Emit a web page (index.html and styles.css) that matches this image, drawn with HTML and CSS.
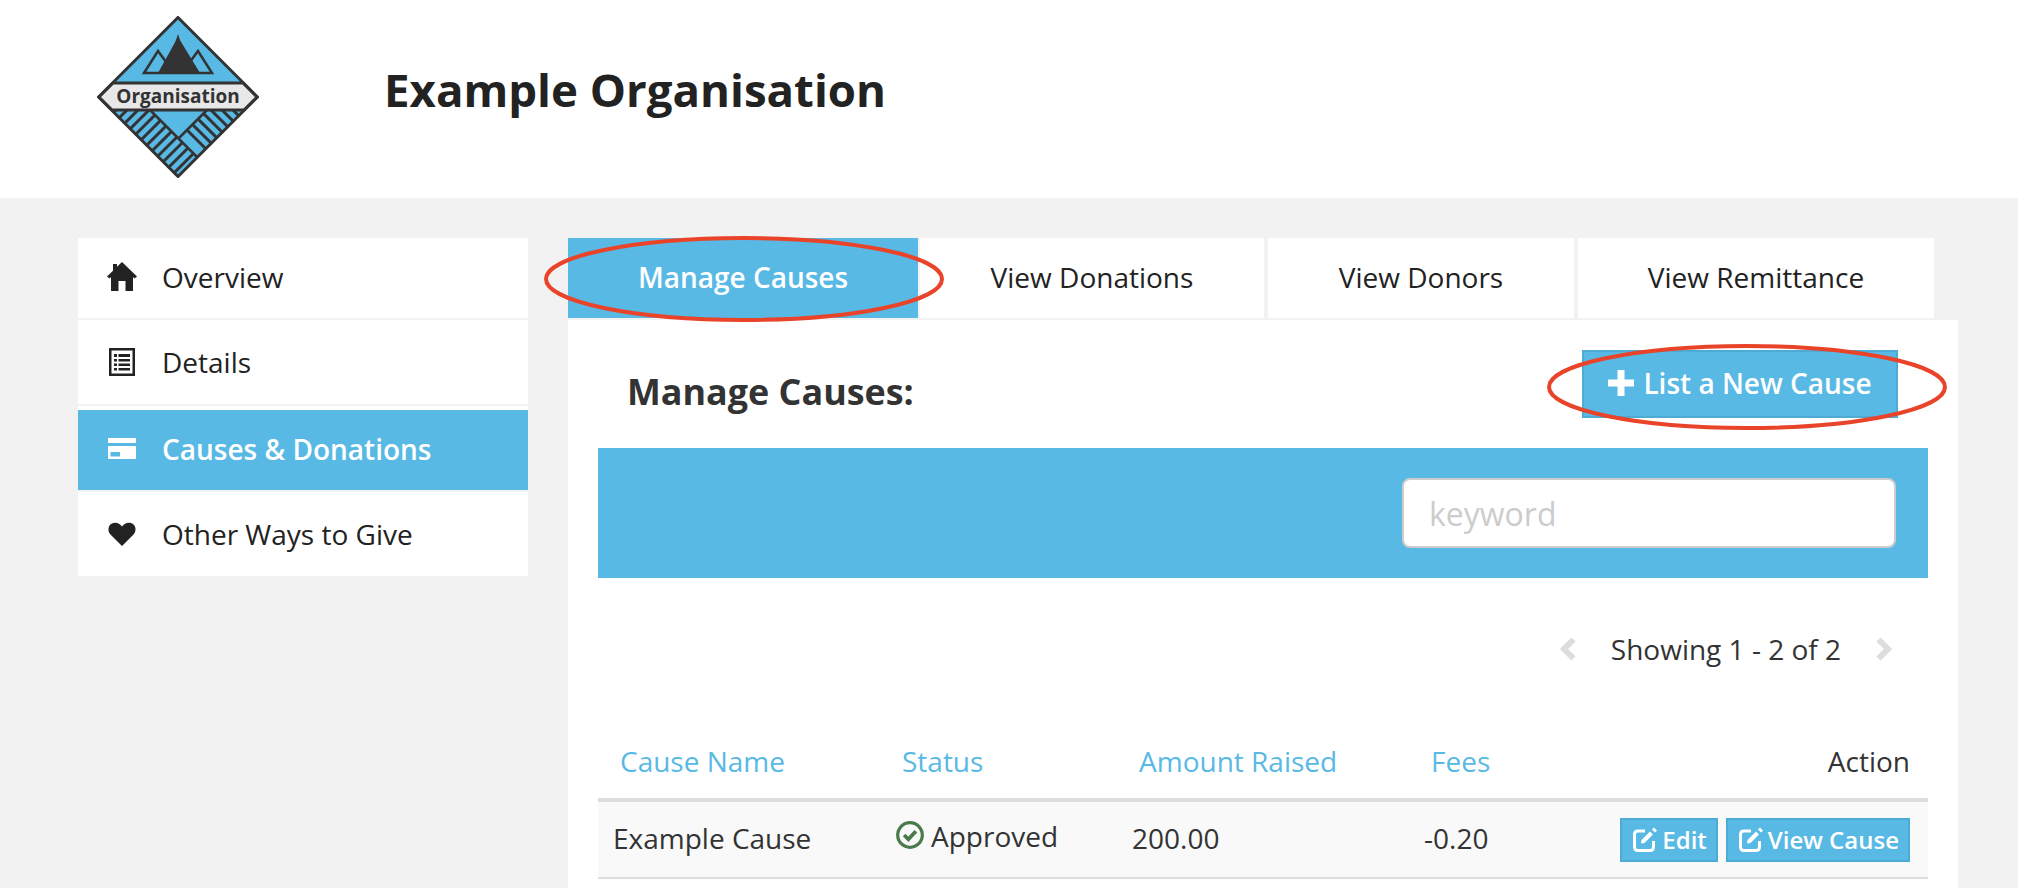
FILE: index.html
```html
<!DOCTYPE html>
<html lang="en">
<head>
<meta charset="utf-8">
<title>Example Organisation</title>
<link rel="stylesheet" href="styles.css">
</head>
<body>
<header class="site-header">
  <svg class="logo" viewBox="0 0 162 162" width="162" height="162">
    <defs>
      <clipPath id="bandL"><polygon points="13,94 53,94 101,142 81,162"/></clipPath>
      <clipPath id="bandR"><polygon points="110,94 149,94 101,142 81,123"/></clipPath>
    </defs>
    <polygon points="81,1.500 160.500,81 81,160.500 1.500,81" fill="#58b9e5" stroke="#333" stroke-width="3"/>
    <polygon points="47,57 61,35 72,50 81,22 90,50 101,35 115,57" fill="#58b9e5" stroke="#333" stroke-width="2.5" stroke-linejoin="miter"/>
    <polygon points="81,21 103,57 61,57" fill="#333"/>
    <g clip-path="url(#bandL)" stroke="#333" stroke-width="3">
      <path d="M0 113L113 0M0 124L124 0M0 135L135 0M0 146L146 0M0 157L157 0M0 168L168 0M0 179L179 0M0 190L190 0M0 201L201 0M0 212L212 0M0 223L223 0M0 234L234 0"/>
    </g>
    <g clip-path="url(#bandR)" stroke="#333" stroke-width="3">
      <path d="M0 -64L162 98M0 -53L162 109M0 -42L162 120M0 -31L162 131M0 -20L162 142M0 -9L162 153M0 2L162 164M0 13L162 175M0 24L162 186"/>
    </g>
    <path d="M53 94L101 142M110 94L81 123" stroke="#333" stroke-width="2.5" fill="none"/>
    <polygon points="16,67 146,67 160,81 147,94 15,94 2,81" fill="#e8e8e8" stroke="#333" stroke-width="3"/>
    <text class="logo-text" x="81" y="87" text-anchor="middle">Organisation</text>
  </svg>
  <h1 class="org-name">Example Organisation</h1>
</header>

<div class="page">
  <nav class="side-nav">
    <a class="side-item">
      <svg class="side-icon" viewBox="0 0 30 30"><path d="M15 0L30 14.5L27.500 16.500L26 15V29H18.500V19H11.500V29H4V15L2.500 16.500L0 14.500L6 8.700V2H10V4.800Z" fill="#222"/></svg>
      <span>Overview</span>
    </a>
    <a class="side-item">
      <svg class="side-icon" viewBox="0 0 30 30"><path fill-rule="evenodd" d="M2 1H28V29H2ZM4.500 3.500V26.500H25.500V3.500ZM7 7H10V10H7ZM11.500 7H23V10H11.500ZM7 12H10V14.500H7ZM11.500 12H23V14.500H11.500ZM7 16.500H10V19H7ZM11.500 16.500H23V19H11.500ZM7 21H10V23.500H7ZM11.500 21H23V23.500H11.500Z" fill="#222"/></svg>
      <span>Details</span>
    </a>
    <a class="side-item side-active">
      <svg class="side-icon" viewBox="0 0 30 30"><path fill-rule="evenodd" d="M1 4H29V9H1ZM1 12H29V25H1ZM3.500 18V22.500H13V18Z" fill="#fff"/></svg>
      <span>Causes &amp; Donations</span>
    </a>
    <a class="side-item">
      <svg class="side-icon" viewBox="0 0 30 30"><path d="M15 27L3.500 15.500C0.500 12.500 1 7 4 5C7.500 2.500 12.500 3.500 15 7.500C17.500 3.500 22.500 2.500 26 5C29 7 29.500 12.500 26.500 15.500Z" fill="#222"/></svg>
      <span>Other Ways to Give</span>
    </a>
  </nav>

  <main class="main">
    <div class="tabs">
      <a class="tab tab-active tab-a">Manage Causes</a>
      <a class="tab tab-b">View Donations</a>
      <a class="tab tab-c">View Donors</a>
      <a class="tab tab-d">View Remittance</a>
    </div>
    <section class="panel">
      <div class="panel-head">
        <h2 class="panel-title">Manage Causes:</h2>
        <a class="btn-new">
          <svg class="plus" viewBox="0 0 26 26"><path d="M9.500 0H16.500V9.500H26V16.500H16.500V26H9.500V16.500H0V9.500H9.500Z" fill="#fff"/></svg>
          List a New Cause
        </a>
      </div>
      <div class="filter">
        <input class="keyword" type="text" placeholder="keyword">
      </div>
      <div class="pager">
        <svg class="chev" viewBox="0 0 16 24"><path d="M13.500 2.500L4 12L13.500 21.500" fill="none" stroke="#ddd" stroke-width="6"/></svg>
        <span class="pager-text">Showing 1 - 2 of 2</span>
        <svg class="chev" viewBox="0 0 16 24"><path d="M2.500 2.500L12 12L2.500 21.500" fill="none" stroke="#ddd" stroke-width="6"/></svg>
      </div>
      <table class="causes">
        <colgroup><col class="c1"><col class="c2"><col class="c3"><col class="c4"><col></colgroup>
        <thead>
          <tr>
            <th>Cause Name</th>
            <th>Status</th>
            <th>Amount Raised</th>
            <th>Fees</th>
            <th class="th-action">Action</th>
          </tr>
        </thead>
        <tbody>
          <tr>
            <td>Example Cause</td>
            <td><span class="status"><svg class="check" viewBox="0 0 28 28"><circle cx="14" cy="14" r="11.500" fill="none" stroke="#4a7a4a" stroke-width="3"/><path d="M8.500 14L12.500 18L19.500 10.500" fill="none" stroke="#4a7a4a" stroke-width="3.500"/></svg>Approved</span></td>
            <td>200.00</td>
            <td>-0.20</td>
            <td class="td-action">
              <div class="actions">
                <a class="btn-small"><svg class="edit" viewBox="0 0 26 26"><path d="M13 4H6C3.800 4 2.500 5.300 2.500 7.500V20C2.500 22.200 3.800 23.500 6 23.500H18C20.200 23.500 21.500 22.200 21.500 20V14" fill="none" stroke="#fff" stroke-width="3"/><path d="M9.500 13L18 4.500L21 7.500L12.500 16L9 16.500Z M20 2.500L22 .5L25 3.500L23 5.500Z" fill="#fff"/></svg>Edit</a>
                <a class="btn-small"><svg class="edit" viewBox="0 0 26 26"><path d="M13 4H6C3.800 4 2.500 5.300 2.500 7.500V20C2.500 22.200 3.800 23.500 6 23.500H18C20.200 23.500 21.500 22.200 21.500 20V14" fill="none" stroke="#fff" stroke-width="3"/><path d="M9.500 13L18 4.500L21 7.500L12.500 16L9 16.500Z M20 2.500L22 .5L25 3.500L23 5.500Z" fill="#fff"/></svg>View Cause</a>
              </div>
            </td>
          </tr>
        </tbody>
      </table>
    </section>
  </main>
</div>

<svg class="mark mark-tab" viewBox="0 0 400 86" width="400" height="86"><ellipse cx="200" cy="43" rx="198" ry="41" fill="none" stroke="#e9432a" stroke-width="4"/></svg>
<svg class="mark mark-btn" viewBox="0 0 400 86" width="400" height="86"><ellipse cx="200" cy="43" rx="198" ry="41" fill="none" stroke="#e9432a" stroke-width="4"/></svg>
</body>
</html>
```

FILE: styles.css
```css
html, body {
  margin: 0;
  padding: 0;
  height: 888px;
  overflow: hidden;
}
body {
  position: relative;
  background: #f2f2f2;
  font-family: "Open Sans", "Noto Sans", sans-serif;
  font-size: 28px;
  color: #222;
}
.site-header {
  display: flex;
  align-items: center;
  height: 198px;
  background: #fff;
  padding-left: 97px;
  box-sizing: border-box;
}
.logo {
  flex: none;
  margin-top: -4px;
}
.logo-text {
  font-family: "Open Sans", sans-serif;
  font-weight: 700;
  font-size: 19px;
  fill: #333;
}
.org-name {
  margin: -20px 0 0 125px;
  font-size: 45.600px;
  font-weight: 700;
  color: #222;
  line-height: 1.2;
}
.page {
  display: flex;
  gap: 40px;
  padding: 40px 0 0 78px;
}
.side-nav {
  width: 450px;
  flex: none;
  display: flex;
  flex-direction: column;
  align-self: flex-start;
  gap: 2px;
}
.side-item {
  display: flex;
  align-items: center;
  height: 80px;
  box-sizing: border-box;
  background: #fff;
  padding: 0 0 2px 29px;
}
.side-item:nth-child(2) { height: 84px; padding-bottom: 0; }
.side-item:nth-child(3) {
  height: 80px;
  margin-top: 4px;
}
.side-item:nth-child(4) { height: 84px; padding-bottom: 0; }
.side-active {
  background: #58b9e5;
  color: #fff;
  font-weight: 600;
  position: relative;
}
.side-active::before {
  content: "";
  position: absolute;
  left: 0;
  right: 0;
  top: -4px;
  height: 4px;
  background: #fff;
}
.side-icon {
  width: 30px;
  height: 30px;
  flex: none;
  margin-right: 25px;
}
.main {
  width: 1390px;
  flex: none;
}
.tabs {
  display: flex;
  gap: 4px;
  margin-bottom: 2px;
}
.tab {
  display: flex;
  align-items: center;
  justify-content: center;
  height: 80px;
  padding-bottom: 2px;
  background: #fff;
  box-sizing: border-box;
}
.tab-a { width: 350px; margin-right: -2px; }
.tab-b { width: 344px; }
.tab-c { width: 306px; }
.tab-d { width: 356px; }
.tab-active {
  background: #58b9e5;
  color: #fff;
  font-weight: 600;
}
.panel {
  background: #fff;
  padding: 0 30px;
  height: 570px;
  color: #333;
}
.panel-head {
  display: flex;
  justify-content: space-between;
  align-items: flex-start;
  height: 128px;
  padding: 30px 30px 0 29px;
  box-sizing: border-box;
}
.panel-title {
  margin: 20px 0 0;
  font-size: 35.900px;
  font-weight: 700;
  line-height: 1.2;
  color: #333;
}
.btn-new {
  display: flex;
  align-items: center;
  width: 316px;
  height: 68px;
  padding-bottom: 2px;
  box-sizing: border-box;
  justify-content: center;
  background: #58b9e5;
  border: 2px solid #4eabd6;
  color: #fff;
  font-weight: 600;
  font-size: 28px;
}
.plus {
  width: 26px;
  height: 26px;
  margin-right: 9px;
}
.filter {
  display: flex;
  justify-content: flex-end;
  align-items: center;
  height: 130px;
  background: #58b9e5;
  padding-right: 32px;
}
.keyword {
  width: 494px;
  height: 70px;
  box-sizing: border-box;
  border: 2px solid #ccc;
  border-radius: 8px;
  background: #fff;
  padding: 0 25px;
  font-family: inherit;
  font-size: 32px;
  color: #333;
}
.keyword::placeholder {
  color: #ccc;
  opacity: 1;
}
.pager {
  display: flex;
  justify-content: flex-end;
  align-items: center;
  height: 144px;
  padding-right: 36px;
  padding-bottom: 2px;
  box-sizing: border-box;
  gap: 35px;
}
.chev {
  width: 16px;
  height: 24px;
  flex: none;
}
.causes {
  width: 100%;
  border-collapse: collapse;
  table-layout: fixed;
}
.c1 { width: 282px; }
.c2 { width: 237px; }
.c3 { width: 292px; }
.c4 { width: 150px; }
.causes th {
  height: 78px;
  padding: 2px 18px 0 22px;
  box-sizing: border-box;
  text-align: left;
  font-weight: 400;
  color: #58b9e5;
  border-bottom: 4px solid #ddd;
}
.causes .th-action {
  text-align: right;
  color: #333;
}
.causes td {
  height: 78px;
  padding: 0 18px 4px 15px;
  box-sizing: border-box;
  background: #f9f9f9;
  border-bottom: 2px solid #ddd;
}
.causes .td-action {
  padding: 0 18px 0 0;
}
.actions {
  display: flex;
  justify-content: flex-end;
  gap: 8px;
}
.status {
  display: inline-flex;
  align-items: center;
  gap: 6px;
}
.check {
  width: 30px;
  height: 30px;
  margin-top: -2px;
}
.btn-small {
  display: inline-flex;
  align-items: center;
  height: 44px;
  box-sizing: border-box;
  padding: 0 9px 0 10px;
  background: #58b9e5;
  border: 2px solid #4eabd6;
  color: #fff;
  font-weight: 600;
  font-size: 24px;
}
.edit {
  width: 26px;
  height: 26px;
  margin-right: 4px;
}
.mark {
  position: absolute;
}
.mark-tab {
  left: 544px;
  top: 236px;
}
.mark-btn {
  left: 1547px;
  top: 344px;
}
```
